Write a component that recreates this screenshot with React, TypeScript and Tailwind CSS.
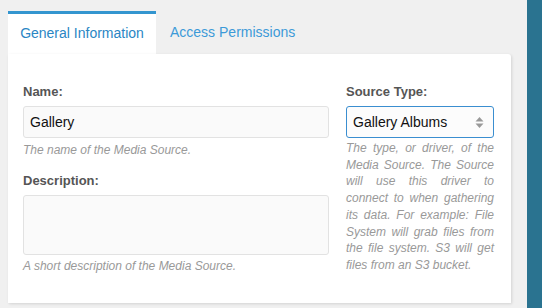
import React from "react";

export default function App() {
  return (
    <div
      className="flex h-[308px] w-[542px] overflow-hidden bg-[#f0f0f0]"
      style={{ fontFamily: '"Liberation Sans", Arial, sans-serif' }}
    >
      <div className="flex w-[527px] flex-col pl-[8px] pt-[11px]">
        <div className="flex h-[43px]">
          <div className="flex w-[148px] items-center justify-center border-t-[3px] border-[#3395cf] bg-white pb-[1px] text-[14px] text-[#2a86c4]">
            General Information
          </div>
          <div className="flex items-center pb-[1px] pl-[14px] text-[14px] text-[#3c9ad8]">
            Access Permissions
          </div>
        </div>
        <div className="flex h-[249px] w-[503px] gap-[17px] rounded-tr-[3px] bg-white pl-[15px] pt-[30px] shadow-[1px_1px_3px_rgba(0,0,0,0.12)]">
          <div className="flex w-[306px] flex-col">
            <label className="text-[13px] font-bold leading-[16px] text-[#555]">Name:</label>
            <div className="mt-[6px] flex h-[32px] items-center rounded-[3px] border border-[#e2e2e2] bg-[#fafafa] pl-[6px] text-[14px] text-[#111]">
              Gallery
            </div>
            <p className="mt-[4px] text-[12px] italic leading-[16px] text-[#999]">
              The name of the Media Source.
            </p>
            <label className="mt-[15px] text-[13px] font-bold leading-[16px] text-[#555]">
              Description:
            </label>
            <div className="mt-[6px] h-[60px] rounded-[3px] border border-[#e2e2e2] bg-[#fafafa]" />
            <p className="mt-[3px] text-[12px] italic leading-[16px] text-[#999]">
              A short description of the Media Source.
            </p>
          </div>
          <div className="flex w-[148px] flex-col">
            <label className="text-[13px] font-bold leading-[16px] text-[#555]">Source Type:</label>
            <div className="mt-[6px] flex h-[32px] items-center justify-between rounded-[3px] border border-[#3a8ed0] bg-[#fcfcfc] pl-[6px] pr-[9px] text-[14px] text-[#111]">
              <span>Gallery Albums</span>
              <svg width="9" height="13" viewBox="0 0 9 13">
                <path d="M4.5 1 L8.5 5.5 H0.5 Z" fill="#999" />
                <path d="M4.5 12 L8.5 7.5 H0.5 Z" fill="#999" />
              </svg>
            </div>
            <p className="mt-[2px] text-justify text-[12px] italic leading-[16.7px] text-[#999]">
              The type, or driver, of the Media Source. The Source will use this driver to connect to
              when gathering its data. For example: File System will grab files from the file system.
              S3 will get files from an S3 bucket.
            </p>
          </div>
        </div>
      </div>
      <div className="h-full w-[15px] bg-[#2a7390]" />
    </div>
  );
}
